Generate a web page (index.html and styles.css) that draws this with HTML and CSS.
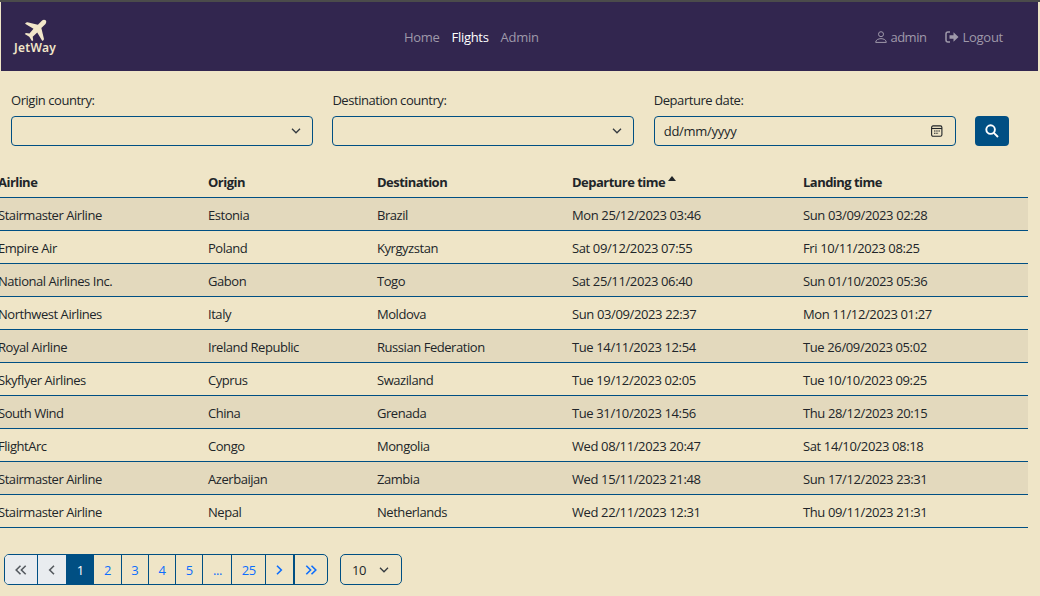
FILE: index.html
```html
<!DOCTYPE html>
<html lang="en">
<head>
<meta charset="utf-8">
<title>JetWay - Flights</title>
<link rel="stylesheet" href="styles.css">
</head>
<body>
<header class="navbar">
  <a class="brand">
    <svg class="plane" viewBox="0 0 24 24"><path d="M22.6 1.400c-1-1-2.800-.8-4 .4l-4.100 4.100L3.600 3.300c-.7-.1-1.200.1-1.600.5l-.9 1.200 8.800 5.300-4.200 4.700-3.700-.5L.8 15.700l4.700 2.900 2.900 4.700 1.200-1.200-.5-3.700 4.700-4.200 5.300 8.800 1.200-.9c.4-.4.6-.9.5-1.600L18.100 9.500l4.100-4.100c1.200-1.200 1.400-3 .4-4z"/></svg>
    <span class="brand-name">JetWay</span>
  </a>
  <nav class="menu"><a>Home</a><a class="current">Flights</a><a>Admin</a></nav>
  <div class="account">
    <a><svg class="user-icon" viewBox="0 0 12 12"><circle cx="6" cy="3.200" r="2.500"/><path d="M.7 11.400c0-5 10.600-5 10.600 0z"/></svg>admin</a>
    <a><svg class="exit-icon" viewBox="0 0 14 12"><path class="frame" d="M5 1H3Q1 1 1 3v6q0 2 2 2h2"/><path class="arrow" d="M4.500 4.300h4V1.200L13.500 6l-5 4.800V7.700h-4z"/></svg>Logout</a>
  </div>
</header>

<form class="filters">
  <div class="field"><label>Origin country:</label>
    <div class="control"><span></span><svg class="chevron" viewBox="0 0 10 6"><path d="M1 .8l4 4 4-4"/></svg></div></div>
  <div class="field"><label>Destination country:</label>
    <div class="control"><span></span><svg class="chevron" viewBox="0 0 10 6"><path d="M1 .8l4 4 4-4"/></svg></div></div>
  <div class="field"><label>Departure date:</label>
    <div class="control date"><span>dd/mm/yyyy</span><svg class="calendar" viewBox="0 0 12 12"><rect x=".6" y=".9" width="10.300" height="10.300" rx="1.500"/><path d="M.6 3.500h10.300"/><path class="dots" d="M3 6h6.500M3 8.300h4.500"/></svg></div></div>
  <button class="search" type="button" aria-label="Search"><svg viewBox="0 0 14 14"><circle cx="5.600" cy="5.600" r="4.300"/><path d="M8.800 8.800l4.200 4.200"/></svg></button>
</form>

<table class="flights">
  <colgroup><col class="c-airline"><col class="c-origin"><col class="c-dest"><col class="c-dep"><col class="c-land"></colgroup>
  <thead><tr><th>Airline</th><th>Origin</th><th>Destination</th><th>Departure time<span class="sort"></span></th><th>Landing time</th></tr></thead>
  <tbody>
    <tr><td>Stairmaster Airline</td><td>Estonia</td><td>Brazil</td><td>Mon 25/12/2023 03:46</td><td>Sun 03/09/2023 02:28</td></tr>
    <tr><td>Empire Air</td><td>Poland</td><td>Kyrgyzstan</td><td>Sat 09/12/2023 07:55</td><td>Fri 10/11/2023 08:25</td></tr>
    <tr><td>National Airlines Inc.</td><td>Gabon</td><td>Togo</td><td>Sat 25/11/2023 06:40</td><td>Sun 01/10/2023 05:36</td></tr>
    <tr><td>Northwest Airlines</td><td>Italy</td><td>Moldova</td><td>Sun 03/09/2023 22:37</td><td>Mon 11/12/2023 01:27</td></tr>
    <tr><td>Royal Airline</td><td>Ireland Republic</td><td>Russian Federation</td><td>Tue 14/11/2023 12:54</td><td>Tue 26/09/2023 05:02</td></tr>
    <tr><td>Skyflyer Airlines</td><td>Cyprus</td><td>Swaziland</td><td>Tue 19/12/2023 02:05</td><td>Tue 10/10/2023 09:25</td></tr>
    <tr><td>South Wind</td><td>China</td><td>Grenada</td><td>Tue 31/10/2023 14:56</td><td>Thu 28/12/2023 20:15</td></tr>
    <tr><td>FlightArc</td><td>Congo</td><td>Mongolia</td><td>Wed 08/11/2023 20:47</td><td>Sat 14/10/2023 08:18</td></tr>
    <tr><td>Stairmaster Airline</td><td>Azerbaijan</td><td>Zambia</td><td>Wed 15/11/2023 21:48</td><td>Sun 17/12/2023 23:31</td></tr>
    <tr><td>Stairmaster Airline</td><td>Nepal</td><td>Netherlands</td><td>Wed 22/11/2023 12:31</td><td>Thu 09/11/2023 21:31</td></tr>
  </tbody>
</table>

<footer class="paging">
  <div class="pages">
    <a class="edge off"><svg viewBox="0 0 12 10"><path d="M5.500.8L1.200 5l4.300 4.200M10.700.8L6.400 5l4.300 4.200"/></svg></a>
    <a class="prev off"><svg viewBox="0 0 12 10"><path d="M8 .8L3.700 5 8 9.200"/></svg></a>
    <a class="active">1</a><a>2</a><a>3</a><a>4</a><a>5</a><a class="gap">...</a><a class="last">25</a>
    <a class="next"><svg viewBox="0 0 12 10"><path d="M4 .8L8.300 5 4 9.200"/></svg></a>
    <a class="edge end"><svg viewBox="0 0 12 10"><path d="M1.300.8L5.600 5 1.300 9.200M6.500.8L10.800 5 6.500 9.200"/></svg></a>
  </div>
  <div class="size"><span>10</span><svg class="chevron" viewBox="0 0 10 6"><path d="M1 .8l4 4 4-4"/></svg></div>
</footer>
</body>
</html>
```

FILE: styles.css
```css
* { box-sizing: border-box; }
body {
  margin: 0;
  height: 596px;
  overflow: hidden;
  border-top: 2px solid #4b4b4b;
  background: #efe5c7;
  color: #212529;
  font: 13px/20px "Open Sans", "Noto Sans", sans-serif;
  letter-spacing: -0.450px;
}
svg { display: block; fill: none; stroke: currentColor; }

.navbar {
  display: grid;
  grid-template-columns: 403px 1fr auto;
  align-items: center;
  height: 69px;
  margin: 0 2px 0 1px;
  padding-right: 35px;
  background: #32264f;
  color: #9f99aa;
  letter-spacing: -0.300px;
}
.brand { width: 46px; margin-left: 13px; color: #f2e7c9; }
.plane { width: 23px; height: 23px; margin: 0 0 0 10px; fill: currentColor; stroke: none; }
.brand-name { display: block; font: 600 12px/14px "Noto Sans", sans-serif; letter-spacing: 0.300px; margin-top: -1px; }
.menu, .account { display: flex; }
.menu { gap: 12px; }
.current { color: #fff; }
.account { gap: 19px; letter-spacing: -0.350px; }
.account a { display: flex; align-items: center; }
.user-icon { width: 12px; height: 12px; margin-right: 3px; }
.exit-icon { width: 14px; height: 12px; margin-right: 3px; }
.account a + a { letter-spacing: -0.250px; }
.account a:first-child { letter-spacing: -0.500px; }
.frame { stroke-width: 1.500; }
.arrow { fill: currentColor; stroke: none; }

.filters { display: flex; align-items: flex-end; gap: 19.400px; padding: 19px 0 0 11px; }
.field { width: 302px; }
.field label { display: block; margin-bottom: 6px; }
.control {
  display: flex;
  align-items: center;
  justify-content: space-between;
  height: 30px;
  padding: 0 11px 0 9px;
  border: 1px solid #004f83;
  border-radius: 4px;
}
.chevron { width: 10px; height: 6px; stroke-width: 1.300; color: #343a40; }
.date { padding-right: 12px; letter-spacing: -0.300px; }
.calendar { width: 12px; height: 12px; stroke-width: 1.100; }
.dots { stroke-dasharray: 1.500 .7; }
.search {
  display: grid;
  place-items: center;
  width: 34px;
  height: 30px;
  padding: 0;
  border: 0;
  border-radius: 4px;
  background: #004f83;
  color: #fff;
}
.search svg { width: 14px; height: 14px; stroke-width: 1.900; }

.flights { width: 1030px; margin: 18px 0 0 -2px; border-collapse: collapse; table-layout: fixed; }
.c-airline { width: 210px; }
.c-origin { width: 169px; }
.c-dest { width: 195px; }
.c-dep { width: 231px; }
.flights th, .flights td { height: 33px; padding: 3px 0 0; border-bottom: 1px solid #004f83; text-align: left; }
.flights td:nth-child(n+4) { letter-spacing: -0.380px; }
.flights th { font-weight: 700; letter-spacing: -0.530px; }
.flights tbody tr:nth-child(odd) { background: #e3d9bd; }
.sort {
  display: inline-block;
  margin: 0 0 6px 3px;
  border: 4px solid transparent;
  border-top: 0;
  border-bottom: 5px solid #212529;
}

.paging { display: flex; gap: 12px; padding: 26px 0 0 4px; }
.pages { display: flex; width: 324px; height: 31px; border: 1px solid #004f83; border-radius: 5px; overflow: hidden; color: #0d6efd; }
.pages a { flex: none; display: flex; align-items: center; justify-content: center; width: 27.300px; border-right: 1px solid #004f83; padding-top: 1px; }
.pages svg { width: 12px; height: 10px; stroke-width: 1.600; }
.pages .edge { width: 33px; }
.pages .prev { width: 29px; }
.pages .off { background: #e9ecef; color: #565b60; }
.pages .active { background: #004f83; color: #fff; }
.pages .gap { width: 29px; }
.pages .last { width: 33.500px; }
.pages .next { width: 29px; border-right-width: 2px; }
.pages .end { width: 32px; border-right: 0; }
.size {
  display: flex;
  align-items: center;
  justify-content: space-between;
  width: 62px;
  height: 31px;
  padding: 1px 12px 0 11px;
  border: 1px solid #004f83;
  border-radius: 5px;
}
```
